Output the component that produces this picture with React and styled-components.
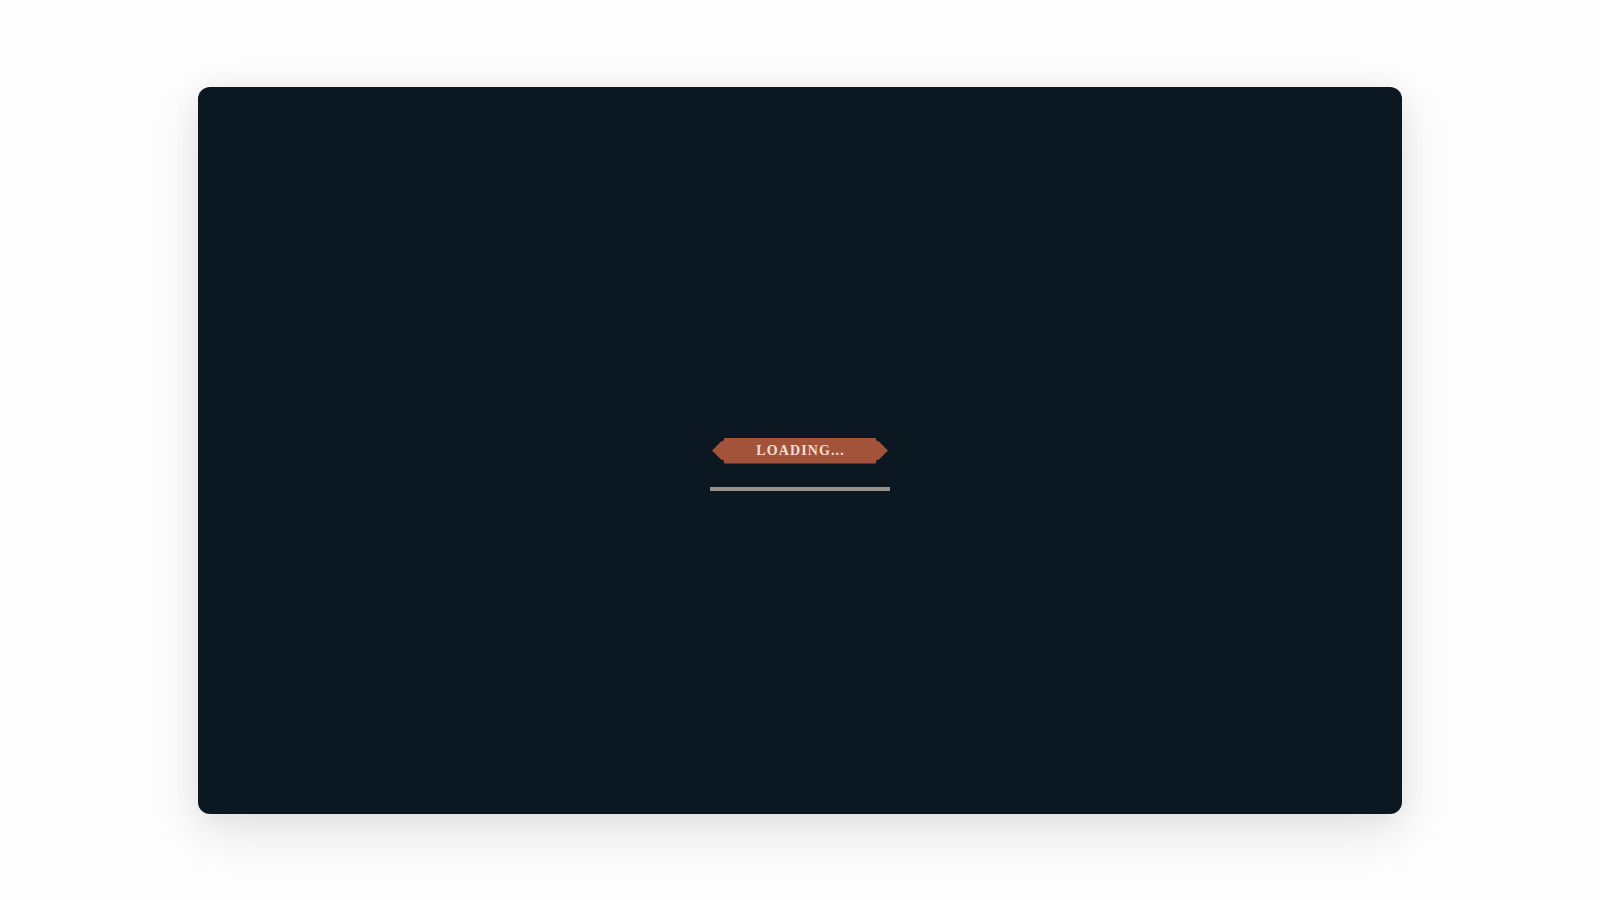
import React from "react";
import styled, { createGlobalStyle } from "styled-components";

const GlobalStyle = createGlobalStyle`
  html, body {
    margin: 0;
    padding: 0;
    background: #fdfdfd;
  }
  #root {
    height: 100vh;
  }
`;

const Page = styled.div`
  height: 100vh;
  display: flex;
  align-items: center;
  justify-content: center;
  box-sizing: border-box;
`;

const Frame = styled.div`
  width: 1204px;
  height: 727px;
  background: #0b1822;
  border-radius: 12px;
  box-shadow: 0 18px 50px rgba(0, 0, 0, 0.1), 0 0 30px rgba(0, 0, 0, 0.05);
  display: flex;
  flex-direction: column;
  align-items: center;
  justify-content: center;
  padding-top: 28px;
  box-sizing: border-box;
`;

// banner with pointed, notched ends
const Banner = styled.div`
  width: 176px;
  height: 26px;
  background: #a3533a;
  display: flex;
  align-items: center;
  justify-content: center;
  clip-path: polygon(
    12px 0, calc(100% - 12px) 0, calc(100% - 12px) 3px, calc(100% - 9px) 4px,
    100% 50%,
    calc(100% - 9px) calc(100% - 4px), calc(100% - 12px) calc(100% - 3px),
    calc(100% - 12px) 100%, 12px 100%, 12px calc(100% - 3px), 9px calc(100% - 4px),
    0 50%,
    9px 4px, 12px 3px
  );
`;

const BannerText = styled.span`
  font-family: "Liberation Serif", "DejaVu Serif", serif;
  font-size: 14px;
  font-weight: 600;
  letter-spacing: 1.1px;
  color: #f0ddd3;
  padding-left: 1.1px;
  line-height: 1;
`;

const ProgressTrack = styled.div`
  margin-top: 23px;
  width: 180px;
  height: 4px;
  background: #4a4644;
  overflow: hidden;
`;

const ProgressFill = styled.div`
  height: 100%;
  background: #9b918b;
`;

const App = () => {
  const progress = 100;
  return (
    <>
      <GlobalStyle />
      <Page>
        <Frame>
          <Banner>
            <BannerText>LOADING...</BannerText>
          </Banner>
          <ProgressTrack>
            <ProgressFill style={{ width: `${progress}%` }} />
          </ProgressTrack>
        </Frame>
      </Page>
    </>
  );
};

export default App;
